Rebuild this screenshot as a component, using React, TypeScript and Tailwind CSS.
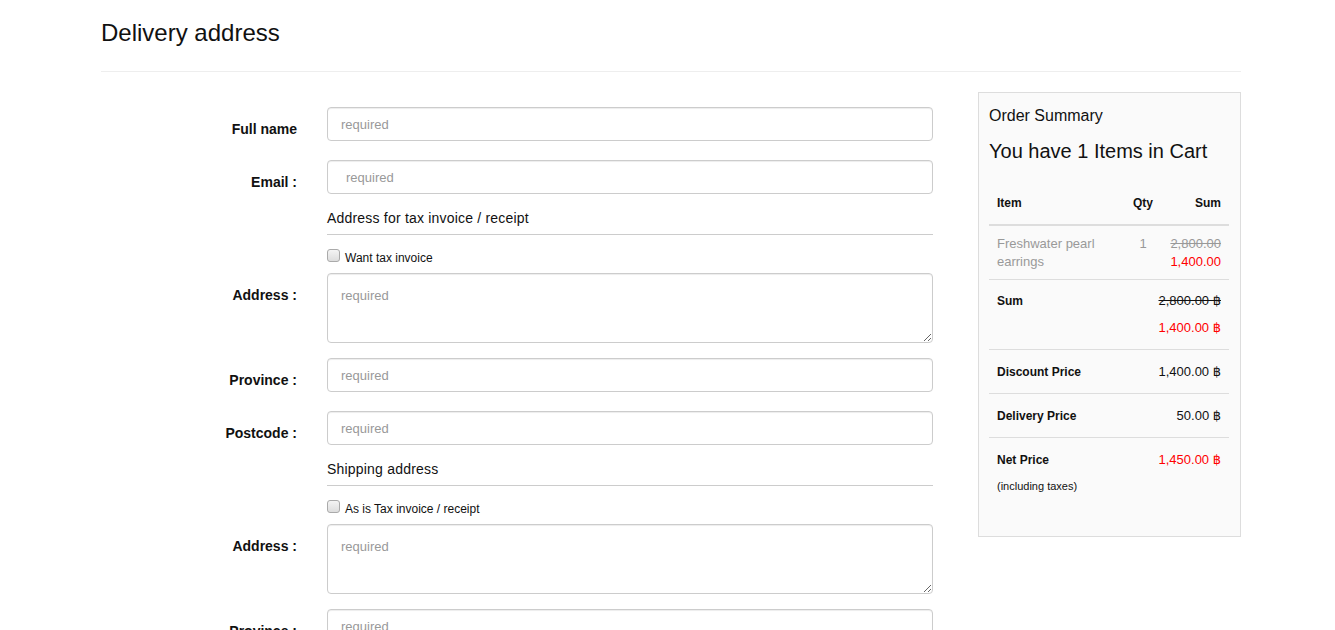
import React from 'react';

const font = { fontFamily: '"Liberation Sans", Arial, "DejaVu Sans", sans-serif' };

function Label({ children }: { children: React.ReactNode }) {
  return (
    <div className="w-[196px] shrink-0 pt-[12px] text-right text-[14px] font-bold leading-[20px] text-[#111]">
      {children}
    </div>
  );
}

function InputRow({ label, indent }: { label: string; indent?: boolean }) {
  return (
    <div className="flex gap-[30px]">
      <Label>{label}</Label>
      <input
        placeholder="required"
        className={`h-[34px] w-[606px] rounded-[4px] border border-[#ccc] bg-white text-[13px] text-[#555] shadow-[inset_0_1px_1px_rgba(0,0,0,0.075)] outline-none placeholder:text-[#999] ${
          indent ? 'pl-[18px]' : 'pl-[13px]'
        }`}
      />
    </div>
  );
}

function AreaRow({ label }: { label: string }) {
  return (
    <div className="flex gap-[30px]">
      <Label>{label}</Label>
      <textarea
        placeholder="required"
        className="h-[70px] w-[606px] resize-y rounded-[4px] border border-[#ccc] bg-white px-[13px] pt-[12px] text-[13px] leading-[20px] text-[#555] shadow-[inset_0_1px_1px_rgba(0,0,0,0.075)] outline-none placeholder:text-[#999]"
      />
    </div>
  );
}

function Section({ title, check }: { title: string; check: string }) {
  return (
    <div className="ml-[226px] w-[606px]">
      <div className="border-b border-[#ccc] pb-[6px] text-[14px] leading-[20px] tracking-[0.2px] text-[#111]">
        {title}
      </div>
      <div className="mt-[13px] flex h-[16px] items-start gap-[5px]">
        <span className="mt-[1px] h-[13px] w-[13px] rounded-[3px] border border-[#aaa] bg-gradient-to-b from-[#f4f4f4] to-[#ddd]" />
        <span className="mt-[3px] text-[12px] leading-[14px] text-[#111]">{check}</span>
      </div>
    </div>
  );
}

function SumRow({ label, value, red }: { label: string; value: string; red?: boolean }) {
  return (
    <div className="flex h-[44px] items-center justify-between border-b border-[#ddd] px-[8px]">
      <span className="text-[12px] font-bold text-[#111]">{label}</span>
      <span className={`text-[13px] ${red ? 'text-[#f00]' : 'text-[#111]'}`}>{value}</span>
    </div>
  );
}

export default function App() {
  return (
    <div className="min-h-screen bg-white text-[#111]" style={font}>
      <div className="ml-[101px] w-[1140px] pt-[20px]">
        <h3 className="h-[26px] text-[24px] leading-[26px]">Delivery address</h3>
        <div className="mt-[25px] border-t border-[#eee]" />

        <div className="flex justify-between">
          <div className="flex flex-col pt-[35px]">
            <div className="flex flex-col gap-[19px]">
              <InputRow label="Full name" />
              <InputRow label="Email :" indent />
            </div>
            <div className="mt-[14px]">
              <Section title="Address for tax invoice / receipt" check="Want tax invoice" />
            </div>
            <div className="mt-[9px]">
              <AreaRow label="Address :" />
            </div>
            <div className="mt-[15px] flex flex-col gap-[19px]">
              <InputRow label="Province :" />
              <InputRow label="Postcode :" />
            </div>
            <div className="mt-[14px]">
              <Section title="Shipping address" check="As is Tax invoice / receipt" />
            </div>
            <div className="mt-[9px]">
              <AreaRow label="Address :" />
            </div>
            <div className="mt-[15px] flex flex-col gap-[19px] pb-[40px]">
              <InputRow label="Province :" />
              <InputRow label="Postcode :" />
            </div>
          </div>

          <div className="mt-[20px] h-[445px] w-[263px] border border-[#ddd] bg-[#fafafa] pl-[10px] pr-[11px] pt-[12px]">
            <div className="text-[16px] leading-[22px]">Order Summary</div>
            <div className="mt-[13px] text-[20px] leading-[22px]">You have 1 Items in Cart</div>

            <div className="mt-[20px]">
              <div className="grid h-[44px] grid-cols-[1fr_44px_64px] items-center border-b-2 border-[#ddd] text-[12px] font-bold">
                <span className="pl-[8px]">Item</span>
                <span className="text-center">Qty</span>
                <span className="pr-[8px] text-right">Sum</span>
              </div>
              <div className="grid grid-cols-[1fr_44px_64px] border-b border-[#ddd] pb-[8px] pt-[9px] text-[13px] leading-[18px]">
                <span className="pl-[8px] pr-[20px] text-[#999]">Freshwater pearl earrings</span>
                <span className="text-center text-[#999]">1</span>
                <span className="flex flex-col items-end pr-[8px]">
                  <span className="text-[#999] line-through">2,800.00</span>
                  <span className="text-[#f00]">1,400.00</span>
                </span>
              </div>
              <div className="flex justify-between border-b border-[#ddd] px-[8px] pb-[12px] pt-[12px] leading-[18px]">
                <span className="text-[12px] font-bold">Sum</span>
                <span className="flex flex-col items-end gap-[9px] text-[13px]">
                  <span className="line-through">2,800.00 ฿</span>
                  <span className="text-[#f00]">1,400.00 ฿</span>
                </span>
              </div>
              <SumRow label="Discount Price" value="1,400.00 ฿" />
              <SumRow label="Delivery Price" value="50.00 ฿" />
              <div className="px-[8px] pt-[13px]">
                <div className="flex justify-between leading-[18px]">
                  <span className="text-[12px] font-bold">Net Price</span>
                  <span className="text-[13px] text-[#f00]">1,450.00 ฿</span>
                </div>
                <div className="mt-[8px] text-[11px] leading-[18px]">(including taxes)</div>
              </div>
            </div>
          </div>
        </div>
      </div>
    </div>
  );
}
